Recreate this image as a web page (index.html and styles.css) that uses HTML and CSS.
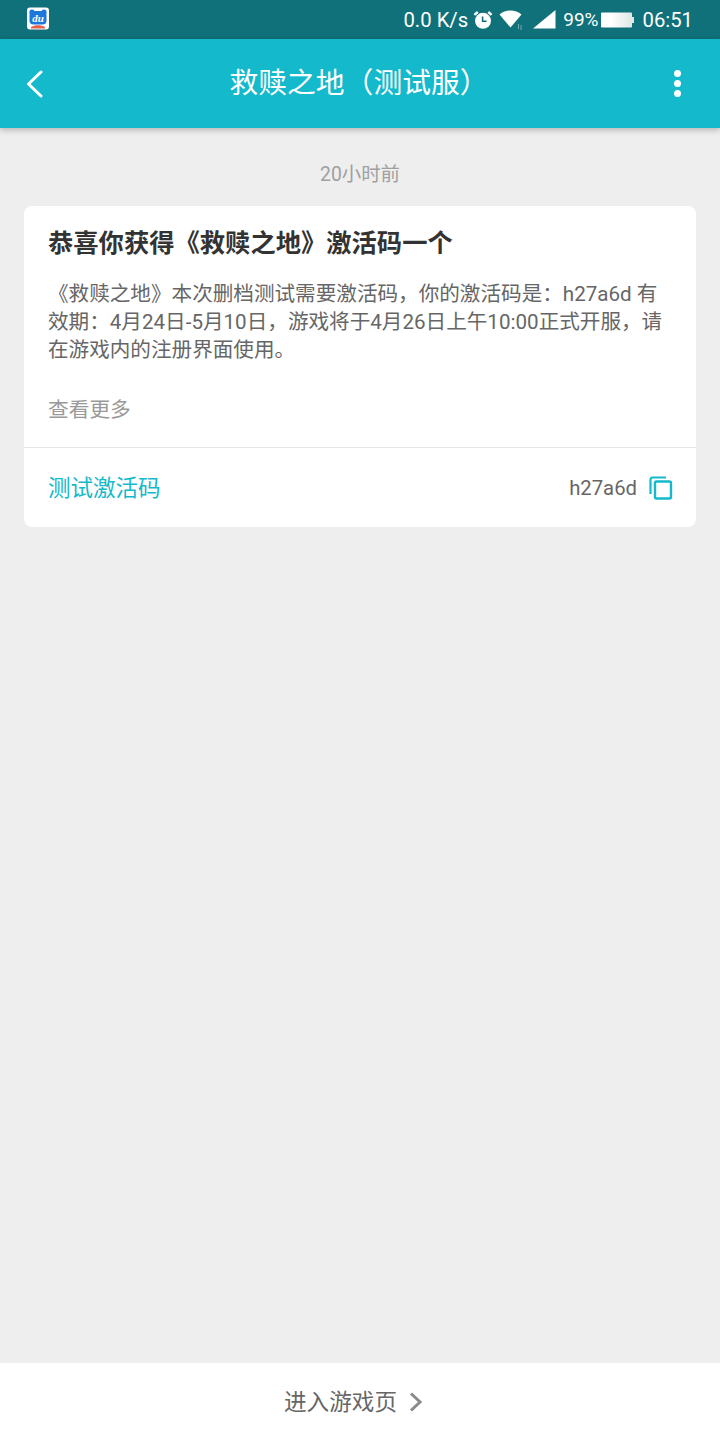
FILE: index.html
```html
<!DOCTYPE html>
<html lang="zh">
<head>
<meta charset="UTF-8">
<title>救赎之地（测试服）</title>
<link rel="stylesheet" href="styles.css">
</head>
<body>
<div class="page">
    <div class="status">
        <svg class="app-icon" width="24" height="24" viewBox="0 0 24 24">
            <rect x="1" y="0.5" width="22" height="22" rx="3" fill="#fff"/>
            <circle cx="6" cy="5" r="2.6" fill="#1e78dc"/>
            <circle cx="18" cy="5" r="2.6" fill="#1e78dc"/>
            <rect x="3.5" y="4" width="17" height="13.5" rx="4" fill="#1e78dc"/>
            <path d="M5 20c4-2.5 10-2.5 14 0v1.5H5z" fill="#e8604c"/>
            <text x="12" y="14.5" class="app-text">du</text>
        </svg>
        <div class="status-right">
            <span class="net">0.0 K/s</span>
            <svg class="ic-alarm" width="22" height="22" viewBox="0 0 22 22">
                <path d="M3.2 6.8 1.6 5l3.4-2.9 1.6 1.8zM18.8 6.8 20.4 5 17 2.100l-1.600 1.800z" fill="#fff"/>
                <circle cx="11" cy="11.800" r="8" fill="#fff"/>
                <path d="M10.600 7.500v4.800h4" fill="none" stroke="#10717a" stroke-width="1.600"/>
            </svg>
            <svg class="ic-wifi" width="26" height="22" viewBox="0 0 26 22">
                <path d="M0.500 5.500C3.500 2.800 7.500 1.500 11.500 1.500s8 1.300 11 4L11.500 18.500z" fill="#fff"/>
                <path d="M19 15h1v5h-1zM21.500 16h1v5h-1z" fill="#6fa9ae"/>
            </svg>
            <svg class="ic-signal" width="24" height="22" viewBox="0 0 24 22">
                <path d="M1 19.500 23.500 1v18.500z" fill="#fff"/>
            </svg>
            <span class="batt-pct">99%</span>
            <svg class="ic-batt" width="34" height="16" viewBox="0 0 34 16">
                <defs>
                    <linearGradient id="battFill">
                        <stop offset="0.3" stop-color="#fff"/>
                        <stop offset="1" stop-color="#dfe6e6"/>
                    </linearGradient>
                </defs>
                <rect x="0" y="0.500" width="31" height="15" rx="1" fill="url(#battFill)"/>
                <rect x="31" y="5" width="2" height="6" fill="#dfe6e6"/>
            </svg>
            <span class="clock">06:51</span>
        </div>
    </div>

    <header class="toolbar">
        <svg class="back" width="20" height="28" viewBox="0 0 20 28">
            <path d="M17 2 4.500 14 17 26" fill="none" stroke="#fff" stroke-width="3" stroke-linecap="round" stroke-linejoin="round"/>
        </svg>
        <h1 class="title">救赎之地（测试服）</h1>
        <div class="more"><i></i><i></i><i></i></div>
    </header>

    <main class="content">
        <div class="time">20小时前</div>
        <div class="card">
            <div class="card-body">
                <h2 class="card-title">恭喜你获得《救赎之地》激活码一个</h2>
                <p class="card-text">《救赎之地》本次删档测试需要激活码，你的激活码是：h27a6d 有效期：4月24日-5月10日，游戏将于4月26日上午10:00正式开服，请在游戏内的注册界面使用。</p>
                <div class="see-more">查看更多</div>
            </div>
            <div class="card-foot">
                <span class="code-label">测试激活码</span>
                <span class="code">h27a6d</span>
                <svg class="copy" width="26" height="26" viewBox="0 0 26 26">
                    <path d="M18 2.500H4.500a2 2 0 0 0-2 2V19" fill="none" stroke="#14b9cb" stroke-width="2.200"/>
                    <rect x="7" y="6.500" width="16" height="17" rx="1.500" fill="none" stroke="#14b9cb" stroke-width="2.400"/>
                </svg>
            </div>
        </div>
    </main>

    <footer class="bottom">
        <span class="bottom-text">进入游戏页</span>
        <svg class="chev" width="16" height="22" viewBox="0 0 16 22">
            <path d="M3 2.500 12 11 3 19.500" fill="none" stroke="#8a8a8a" stroke-width="3"/>
        </svg>
    </footer>
</div>
</body>
</html>
```
FILE: styles.css
```css
html, body
{
    margin: 0;
    padding: 0;
}

body
{
    font-family: Roboto, "Noto Sans CJK SC", sans-serif;
    background-color: #eeeeee;
}

.page
{
    width: 720px;
    height: 1440px;
    display: flex;
    flex-direction: column;
}

.status
{
    height: 39px;
    background-color: #10717a;
    display: flex;
    align-items: center;
    justify-content: space-between;
    padding: 0 27px 0 26px;
    color: #fff;
    font-size: 20.3px;
    flex: none;
}

.app-icon
{
    display: block;
    margin-bottom: 1px;
}

.app-text
{
    font-family: "Liberation Serif", serif;
    font-style: italic;
    font-weight: bold;
    font-size: 11px;
    fill: #fff;
    text-anchor: middle;
}

.status-right
{
    display: flex;
    align-items: center;
}

.status-right svg
{
    display: block;
}

.ic-alarm
{
    margin-left: 4px;
}

.ic-wifi
{
    margin-left: 5px;
}

.ic-signal
{
    margin-left: 7px;
}

.batt-pct
{
    margin-left: 7px;
    font-size: 19px;
}

.ic-batt
{
    margin-left: 3px;
}

.clock
{
    margin-left: 7px;
}

.toolbar
{
    height: 89px;
    background-color: #14b9cb;
    box-shadow: 0 2px 6px rgba(0, 0, 0, 0.25);
    display: flex;
    align-items: center;
    padding: 0 39px 0 24px;
    position: relative;
    flex: none;
}

.title
{
    flex: 1;
    margin: 0;
    padding-bottom: 6px;
    text-align: center;
    font-size: 28.8px;
    font-weight: normal;
    color: #fff;
}

.more i
{
    display: block;
    width: 7px;
    height: 7px;
    border-radius: 50%;
    background-color: #fff;
    margin: 3px 0;
}

.content
{
    flex: 1;
    padding: 0 24px;
}

.time
{
    margin-top: 33px;
    text-align: center;
    font-size: 19.4px;
    line-height: 28px;
    color: #a0a0a0;
}

.card
{
    margin-top: 17px;
    background-color: #fff;
    border-radius: 8px;
}

.card-body
{
    padding: 21px 24px 0 24px;
    height: 242px;
    box-sizing: border-box;
    border-bottom: 1px solid #e6e6e6;
}

.card-title
{
    margin: 0;
    font-size: 25.3px;
    line-height: 34px;
    font-weight: bold;
    color: #333;
}

.card-text
{
    margin: 19px 0 0 0;
    font-size: 20.6px;
    line-height: 28px;
    color: #666;
}

.see-more
{
    margin-top: 32px;
    font-size: 20.7px;
    line-height: 28px;
    color: #999;
}

.card-foot
{
    height: 79px;
    display: flex;
    align-items: center;
    padding: 0 22px 0 24px;
}

.code-label
{
    font-size: 22.5px;
    color: #14b9cb;
    flex: 1;
    padding-bottom: 4px;
}

.code
{
    font-size: 20.3px;
    color: #666;
    margin-right: 11px;
}

.copy
{
    display: block;
}

.bottom
{
    height: 77px;
    background-color: #fff;
    display: flex;
    align-items: center;
    justify-content: center;
    gap: 11px;
    padding-right: 12px;
    box-sizing: border-box;
    font-size: 22.6px;
    color: #666;
    flex: none;
}

.bottom-text
{
    padding-bottom: 3px;
}
```
